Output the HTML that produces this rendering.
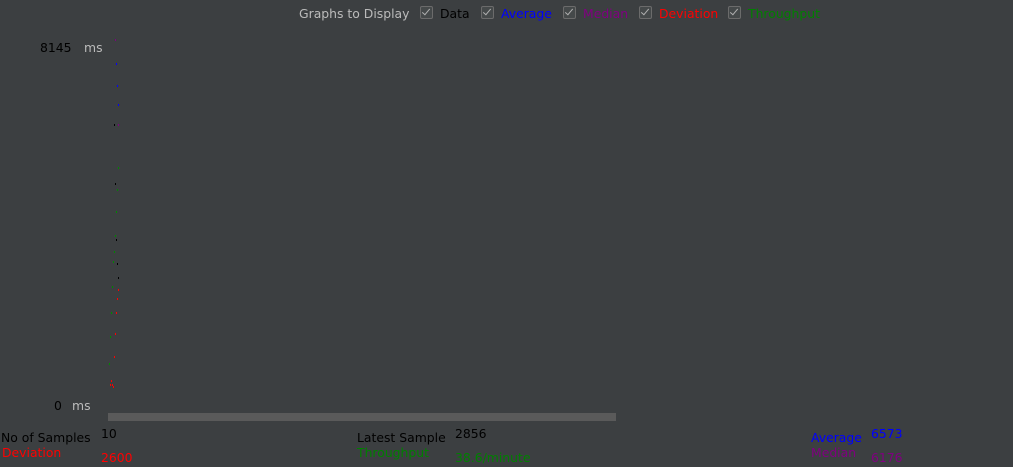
<!DOCTYPE html>
<html><head><style>
body{margin:0;width:1013px;height:467px;background:#3c3f41;position:relative;overflow:hidden;font-family:"DejaVu Sans","Liberation Sans",sans-serif;font-size:12.4px}
.t{position:absolute;white-space:nowrap;line-height:14px}
.cb{position:absolute;width:11px;height:11px;border:1px solid #6b6b6b;border-radius:2px;background:#45494a;top:6px}
.cb:after{content:"";position:absolute;left:3px;top:0px;width:3px;height:7px;border:solid #b0b0b0;border-width:0 1.5px 1.5px 0;transform:rotate(40deg)}
.d{position:absolute;width:1px;height:2px}
</style></head><body>
<div class="t" style="left:299px;top:7px;color:#bbbbbb">Graphs to Display</div>
<div class="cb" style="left:420px"></div><div class="t" style="left:440px;top:7px;color:#000">Data</div>
<div class="cb" style="left:481px"></div><div class="t" style="left:501px;top:7px;color:#0000ff">Average</div>
<div class="cb" style="left:563px"></div><div class="t" style="left:583px;top:7px;color:#800080">Median</div>
<div class="cb" style="left:639px"></div><div class="t" style="left:659px;top:7px;color:#ff0000">Deviation</div>
<div class="cb" style="left:728px"></div><div class="t" style="left:748px;top:7px;color:#008000">Throughput</div>

<div class="t" style="left:40px;top:41px;color:#000">8145</div>
<div class="t" style="left:84px;top:41px;color:#bbbbbb">ms</div>
<div class="t" style="left:54px;top:399px;color:#000">0</div>
<div class="t" style="left:72px;top:399px;color:#bbbbbb">ms</div>
<div style="position:absolute;left:108px;top:413px;width:508px;height:8px;background:#5a5a5a"></div>

<div class="t" style="left:1px;top:431px;color:#000">No of Samples</div>
<div class="t" style="left:101px;top:427px;color:#000">10</div>
<div class="t" style="left:2px;top:446px;color:#ff0000">Deviation</div>
<div class="t" style="left:101px;top:451px;color:#ff0000">2600</div>
<div class="t" style="left:357px;top:431px;color:#000">Latest Sample</div>
<div class="t" style="left:455px;top:427px;color:#000">2856</div>
<div class="t" style="left:357px;top:446px;color:#008000">Throughput</div>
<div class="t" style="left:455px;top:451px;color:#008000">38.6/minute</div>
<div class="t" style="left:811px;top:431px;color:#0000ff">Average</div>
<div class="t" style="left:871px;top:427px;color:#0000ff">6573</div>
<div class="t" style="left:811px;top:446px;color:#800080">Median</div>
<div class="t" style="left:871px;top:451px;color:#800080">6176</div>

<div class="d" style="left:115px;top:39px;background:#800080"></div>
<div class="d" style="left:116px;top:63px;background:#00f"></div>
<div class="d" style="left:117px;top:85px;background:#00f"></div>
<div class="d" style="left:118px;top:104px;background:#00f"></div>
<div class="d" style="left:114px;top:124px;background:#000"></div>
<div class="d" style="left:118px;top:124px;background:#800080"></div>
<div class="d" style="left:118px;top:167px;background:#080"></div>
<div class="d" style="left:115px;top:183px;background:#000"></div>
<div class="d" style="left:117px;top:189px;background:#080"></div>
<div class="d" style="left:116px;top:211px;background:#080"></div>
<div class="d" style="left:115px;top:235px;background:#080"></div>
<div class="d" style="left:116px;top:239px;background:#000"></div>
<div class="d" style="left:114px;top:251px;background:#080"></div>
<div class="d" style="left:113px;top:261px;background:#080"></div>
<div class="d" style="left:117px;top:263px;background:#000"></div>
<div class="d" style="left:118px;top:277px;background:#000"></div>
<div class="d" style="left:112px;top:286px;background:#080"></div>
<div class="d" style="left:118px;top:289px;background:#f00"></div>
<div class="d" style="left:117px;top:298px;background:#f00"></div>
<div class="d" style="left:111px;top:312px;background:#080"></div>
<div class="d" style="left:116px;top:312px;background:#f00"></div>
<div class="d" style="left:115px;top:333px;background:#f00"></div>
<div class="d" style="left:110px;top:336px;background:#080"></div>
<div class="d" style="left:114px;top:356px;background:#f00"></div>
<div class="d" style="left:109px;top:363px;background:#080"></div>
<div class="d" style="left:111px;top:380px;background:#f00"></div>
<div class="d" style="left:110px;top:384px;background:#f00"></div>
<div class="d" style="left:112px;top:384px;background:#f00"></div>
<div class="d" style="left:113px;top:386px;background:#f00"></div>
</body></html>
